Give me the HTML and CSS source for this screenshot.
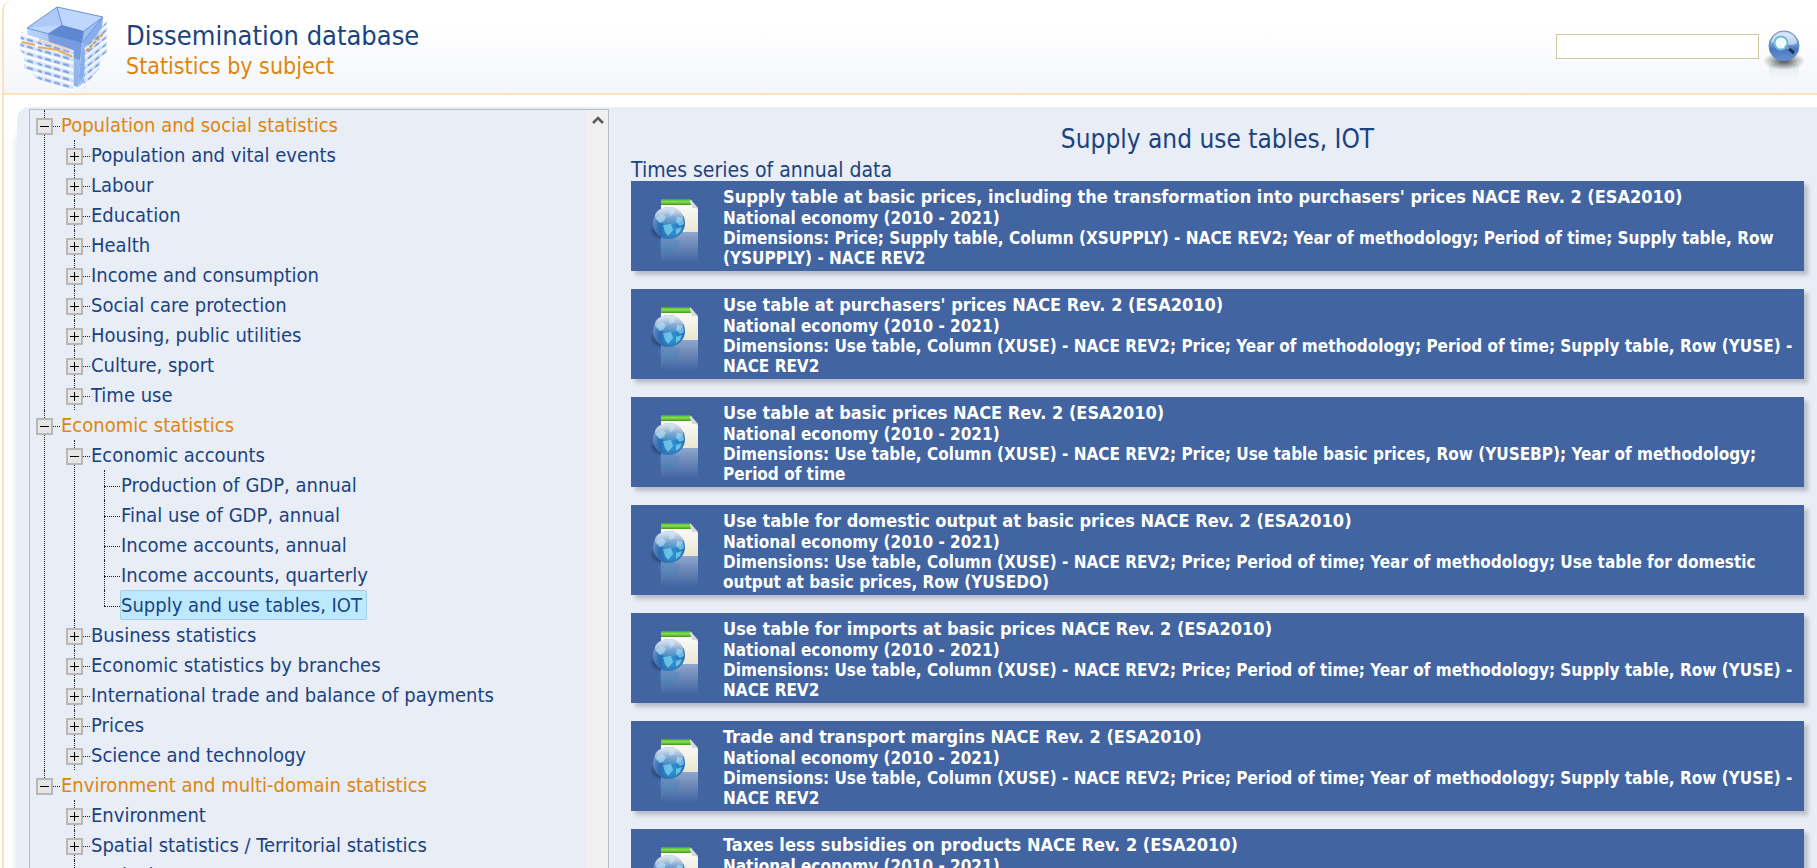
FILE: index.html
```html
<!DOCTYPE html>
<html lang="en">
<head>
<meta charset="utf-8">
<title>Dissemination database</title>
<link rel="stylesheet" href="styles.css">
</head>
<body>
<svg class="defs" width="0" height="0" aria-hidden="true">
  <defs>
    <linearGradient id="paper" x1="0" y1="0" x2="0" y2="1"><stop offset="0" stop-color="#fff"/><stop offset="1" stop-color="#e6e6d0"/></linearGradient>
    <linearGradient id="green" x1="0" y1="0" x2="0" y2="1"><stop offset="0" stop-color="#3fa51c"/><stop offset=".45" stop-color="#8be052"/><stop offset="1" stop-color="#3c9a1c"/></linearGradient>
    <radialGradient id="globe" cx=".6" cy=".7" r=".8"><stop offset="0" stop-color="#2f9ad6"/><stop offset=".5" stop-color="#2b6cb2"/><stop offset="1" stop-color="#93a9cc"/></radialGradient>
    <linearGradient id="gloss" x1="0" y1="0" x2="0" y2="1"><stop offset="0" stop-color="#e4ecf5" stop-opacity=".95"/><stop offset="1" stop-color="#dfe9f5" stop-opacity=".1"/></linearGradient>
    <linearGradient id="reflect" x1="0" y1="0" x2="0" y2="1"><stop offset="0" stop-color="#c4d2ea" stop-opacity=".6"/><stop offset="1" stop-color="#c4d2ea" stop-opacity="0"/></linearGradient>
    <radialGradient id="shade"><stop offset="0" stop-color="#0c1c3c" stop-opacity=".9"/><stop offset="1" stop-color="#0c1c3c" stop-opacity="0"/></radialGradient>
    <symbol id="dataset" viewBox="0 0 50 66">
      <path d="M12 2H42L49 11V34H12Z" fill="url(#paper)"/>
      <path d="M12 1H41L42 7H12Z" fill="url(#green)"/>
      <path d="M41 1L49 10H43Z" fill="#d5d9dc"/>
      <path d="M12 34H49V64H12Z" fill="url(#reflect)"/>
      <ellipse cx="14" cy="33" rx="14" ry="9" fill="url(#shade)"/>
      <circle cx="20" cy="25" r="16" fill="url(#globe)"/>
      <path d="M7 20L13 16L17 19L15 23L11 25ZM20 12L26 11L25 16L21 18ZM28 19L34 20L35 26L31 28L27 24ZM14 27L22 26L24 32L19 38L16 34ZM27 31L33 29L31 34L27 37Z" fill="#7fd3ee" opacity=".75"/>
      <ellipse cx="20" cy="18" rx="14" ry="9" fill="url(#gloss)"/>
      <path d="M9 43Q20 37 31 43Q31 54 20 57Q9 54 9 43Z" fill="#3f83bd" opacity=".35"/>
    </symbol>
  </defs>
</svg>
<div class="page">
  <header class="header">
    <svg class="logo" viewBox="0 0 97 93" aria-hidden="true">
      <defs>
        <linearGradient id="wall" x1="0" y1="0" x2="1" y2="1"><stop offset="0" stop-color="#b9d4fb"/><stop offset="1" stop-color="#8cb0ec"/></linearGradient>
        <pattern id="rows" width="9" height="7" patternUnits="userSpaceOnUse" patternTransform="skewY(16)"><rect width="9" height="7" fill="#dde9fc"/><path d="M1 2Q4 1 7 2" stroke="#6f97d8" stroke-width="2" fill="none"/><path d="M0 5H9" stroke="#fff" stroke-width="2"/></pattern>
        <pattern id="rows2" width="7" height="7" patternUnits="userSpaceOnUse" patternTransform="skewY(-38)"><rect width="7" height="7" fill="#d6e5fb"/><path d="M1 2H5" stroke="#7299d8" stroke-width="2"/><path d="M0 5H7" stroke="#fff" stroke-width="2"/></pattern>
      </defs>
      <path d="M10 28L40 7L86 17L65 43Z" fill="#c0d7fc"/>
      <path d="M10 28L45 25L40 7Z" fill="#adc9f8"/>
      <path d="M86 17L67 31L65 43Z" fill="#9dbdf4"/>
      <path d="M31 34L45 25L67 31L65 43Z" fill="#5f86d2"/>
      <path d="M10 28L65 43L61 87L15 74Z" fill="url(#wall)"/>
      <path d="M31 34L65 43L63 60L33 50Z" fill="#668cd6" opacity=".7"/>
      <path d="M65 43L86 17L82 69L61 87Z" fill="#89aeec"/>
      <path d="M65 43L74 64L61 87L82 69" fill="none" stroke="#bcd4fb"/>
      <path d="M4 32L20 38L56 50V92L20 80L16 74L7 70V54L3 50Z" fill="url(#rows)" opacity=".94"/>
      <path d="M5 42L18 45M21 47L40 50L56 57" fill="none" stroke="#e6ad6c" stroke-width="2"/>
      <path d="M22 40L52 50" stroke="#e3d3c6" stroke-width="3" stroke-dasharray="3 1"/>
      <path d="M20 37V80M56 50V92" stroke="#fff" fill="none"/>
      <path d="M68 47L78 38L90 20V55L84 60L82 68L67 89Z" fill="url(#rows2)" opacity=".9"/>
      <path d="M69 51L87 33" stroke="#d09a58" stroke-width="2" stroke-dasharray="4 1"/>
      <path d="M10 28L40 7L86 17L65 43ZM40 7L45 25M45 25L31 34M67 31L86 17" fill="none" stroke="#6c93dd"/>
    </svg>
    <div class="titles">
      <h1 class="title">Dissemination database</h1>
      <p class="subtitle">Statistics by subject</p>
    </div>
    <form class="search">
      <input class="search-box" type="text" aria-label="Search">
      <button class="search-button" type="button" aria-label="Search">
        <svg class="search-icon" viewBox="0 0 44 64" aria-hidden="true">
          <defs>
            <linearGradient id="ball" x1="0" y1="0" x2="0" y2="1"><stop offset="0" stop-color="#dbe6f5"/><stop offset=".45" stop-color="#6e98d4"/><stop offset=".6" stop-color="#4a78c0"/><stop offset="1" stop-color="#6692d6"/></linearGradient>
            <radialGradient id="drop"><stop offset="0" stop-color="#333" stop-opacity=".9"/><stop offset="1" stop-color="#555" stop-opacity="0"/></radialGradient>
            <linearGradient id="mirror" x1="0" y1="0" x2="0" y2="1"><stop offset="0" stop-color="#d9e5ed"/><stop offset="1" stop-color="#f4f7fa" stop-opacity="0"/></linearGradient>
          </defs>
          <path d="M6 41Q21 36 36 41Q36 54 32 62H10Q6 54 6 41Z" fill="url(#mirror)"/>
          <ellipse cx="21" cy="37" rx="21" ry="9" fill="url(#drop)"/>
          <circle cx="21" cy="22" r="15" fill="url(#ball)" stroke="#6585b8"/>
          <path d="M8 19Q10 9 21 9Q32 9 34 19Q28 23 21 19Q14 16 8 19Z" fill="#edf3fb" opacity=".6"/>
          <circle cx="18" cy="19" r="6.500" fill="#eefaff" stroke="#75b9d4" stroke-width="2"/>
          <path d="M22 22L26 25" stroke="#6fa6c4" stroke-width="2"/><path d="M26 25L31 29" stroke="#173548" stroke-width="3"/>
        </svg>
      </button>
    </form>
  </header>
  <main class="panel">
    <nav class="tree" aria-label="Subjects">
      <ul class="branch">
        <li class="node"><button class="toggle minus" aria-label="Collapse"></button><a class="label top" href="#">Population and social statistics</a>
          <ul class="branch">
            <li class="node"><button class="toggle plus" aria-label="Expand"></button><a class="label" href="#">Population and vital events</a></li>
            <li class="node"><button class="toggle plus" aria-label="Expand"></button><a class="label" href="#">Labour</a></li>
            <li class="node"><button class="toggle plus" aria-label="Expand"></button><a class="label" href="#">Education</a></li>
            <li class="node"><button class="toggle plus" aria-label="Expand"></button><a class="label" href="#">Health</a></li>
            <li class="node"><button class="toggle plus" aria-label="Expand"></button><a class="label" href="#">Income and consumption</a></li>
            <li class="node"><button class="toggle plus" aria-label="Expand"></button><a class="label" href="#">Social care protection</a></li>
            <li class="node"><button class="toggle plus" aria-label="Expand"></button><a class="label" href="#">Housing, public utilities</a></li>
            <li class="node"><button class="toggle plus" aria-label="Expand"></button><a class="label" href="#">Culture, sport</a></li>
            <li class="node"><button class="toggle plus" aria-label="Expand"></button><a class="label" href="#">Time use</a></li>
          </ul>
        </li>
        <li class="node"><button class="toggle minus" aria-label="Collapse"></button><a class="label top" href="#">Economic statistics</a>
          <ul class="branch">
            <li class="node"><button class="toggle minus" aria-label="Collapse"></button><a class="label" href="#">Economic accounts</a>
              <ul class="branch">
                <li class="node leaf"><a class="label" href="#">Production of GDP, annual</a></li>
                <li class="node leaf"><a class="label" href="#">Final use of GDP, annual</a></li>
                <li class="node leaf"><a class="label" href="#">Income accounts, annual</a></li>
                <li class="node leaf"><a class="label" href="#">Income accounts, quarterly</a></li>
                <li class="node leaf"><a class="label selected" href="#">Supply and use tables, IOT</a></li>
              </ul>
            </li>
            <li class="node"><button class="toggle plus" aria-label="Expand"></button><a class="label" href="#">Business statistics</a></li>
            <li class="node"><button class="toggle plus" aria-label="Expand"></button><a class="label" href="#">Economic statistics by branches</a></li>
            <li class="node"><button class="toggle plus" aria-label="Expand"></button><a class="label" href="#">International trade and balance of payments</a></li>
            <li class="node"><button class="toggle plus" aria-label="Expand"></button><a class="label" href="#">Prices</a></li>
            <li class="node"><button class="toggle plus" aria-label="Expand"></button><a class="label" href="#">Science and technology</a></li>
          </ul>
        </li>
        <li class="node"><button class="toggle minus" aria-label="Collapse"></button><a class="label top" href="#">Environment and multi-domain statistics</a>
          <ul class="branch">
            <li class="node"><button class="toggle plus" aria-label="Expand"></button><a class="label" href="#">Environment</a></li>
            <li class="node"><button class="toggle plus" aria-label="Expand"></button><a class="label" href="#">Spatial statistics / Territorial statistics</a></li>
            <li class="node"><button class="toggle plus" aria-label="Expand"></button><a class="label" href="#">Agriculture</a></li>
          </ul>
        </li>
      </ul>
      <div class="scrollbar" aria-hidden="true"><svg class="arrow" viewBox="0 0 12 8"><path d="M1 7L6 2L11 7" fill="none" stroke="#5a5a5a" stroke-width="2.500"/></svg></div>
    </nav>
    <section class="content">
      <h2 class="heading">Supply and use tables, IOT</h2>
      <h3 class="group">Times series of annual data</h3>
      <div class="cards">
        <a class="card" href="#"><svg class="card-icon" aria-hidden="true"><use href="#dataset"/></svg><span class="card-text"><span class="card-title">Supply table at basic prices, including the transformation into purchasers' prices NACE Rev. 2 (ESA2010)</span><span>National economy (2010 - 2021)</span><span>Dimensions: Price; Supply table, Column (XSUPPLY) - NACE REV2; Year of methodology; Period of time; Supply table, Row (YSUPPLY) - NACE REV2</span></span></a>
        <a class="card" href="#"><svg class="card-icon" aria-hidden="true"><use href="#dataset"/></svg><span class="card-text"><span class="card-title">Use table at purchasers' prices NACE Rev. 2 (ESA2010)</span><span>National economy (2010 - 2021)</span><span>Dimensions: Use table, Column (XUSE) - NACE REV2; Price; Year of methodology; Period of time; Supply table, Row (YUSE) - NACE REV2</span></span></a>
        <a class="card" href="#"><svg class="card-icon" aria-hidden="true"><use href="#dataset"/></svg><span class="card-text"><span class="card-title">Use table at basic prices NACE Rev. 2 (ESA2010)</span><span>National economy (2010 - 2021)</span><span>Dimensions: Use table, Column (XUSE) - NACE REV2; Price; Use table basic prices, Row (YUSEBP); Year of methodology; Period of time</span></span></a>
        <a class="card" href="#"><svg class="card-icon" aria-hidden="true"><use href="#dataset"/></svg><span class="card-text"><span class="card-title">Use table for domestic output at basic prices NACE Rev. 2 (ESA2010)</span><span>National economy (2010 - 2021)</span><span>Dimensions: Use table, Column (XUSE) - NACE REV2; Price; Period of time; Year of methodology; Use table for domestic output at basic prices, Row (YUSEDO)</span></span></a>
        <a class="card" href="#"><svg class="card-icon" aria-hidden="true"><use href="#dataset"/></svg><span class="card-text"><span class="card-title">Use table for imports at basic prices NACE Rev. 2 (ESA2010)</span><span>National economy (2010 - 2021)</span><span>Dimensions: Use table, Column (XUSE) - NACE REV2; Price; Period of time; Year of methodology; Supply table, Row (YUSE) - NACE REV2</span></span></a>
        <a class="card" href="#"><svg class="card-icon" aria-hidden="true"><use href="#dataset"/></svg><span class="card-text"><span class="card-title">Trade and transport margins NACE Rev. 2 (ESA2010)</span><span>National economy (2010 - 2021)</span><span>Dimensions: Use table, Column (XUSE) - NACE REV2; Price; Period of time; Year of methodology; Supply table, Row (YUSE) - NACE REV2</span></span></a>
        <a class="card" href="#"><svg class="card-icon" aria-hidden="true"><use href="#dataset"/></svg><span class="card-text"><span class="card-title">Taxes less subsidies on products NACE Rev. 2 (ESA2010)</span><span>National economy (2010 - 2021)</span><span>Dimensions: Use table, Column (XUSE) - NACE REV2; Price; Period of time; Year of methodology; Supply table, Row (YUSE) - NACE REV2</span></span></a>
      </div>
    </section>
  </main>
</div>
</body>
</html>
```
FILE: styles.css
```css
* { box-sizing: border-box; }
html { height: 100%; overflow: hidden; }
body {
  height: 100%;
  margin: 0;
  overflow: hidden;
  background: #fff;
  color: #1b4380;
  font-family: "DejaVu Sans Condensed", Tahoma, "Noto Sans", sans-serif;
  font-size: 20px;
}
a { color: inherit; text-decoration: none; }
button { margin: 0; padding: 0; border: 0; background: none; }
.defs { position: absolute; }
.page {
  display: flex;
  flex-direction: column;
  height: 100%;
  margin-left: 2px;
  border-left: 2px solid #fde0bc;
  border-top-left-radius: 10px;
}
.header {
  display: flex;
  flex: none;
  align-items: flex-start;
  border-bottom: 2px solid #fde0bc;
  background: linear-gradient(#fff 25%, #f4f6fb);
  border-top-left-radius: 10px;
}
.logo { width: 97px; height: 93px; margin-left: 13px; }
.titles { flex: 1; padding: 20px 0 0 12px; }
.title { margin: 0; font-size: 27px; line-height: 32px; font-weight: 400; }
.subtitle { margin: 0; font-size: 23px; line-height: 28px; color: #de860c; }
.search { display: flex; padding: 24px 10px 0 0; }
.search-box {
  width: 203px;
  height: 25px;
  margin-top: 10px;
  padding: 0 4px;
  border: 1px solid #cfc8a0;
  background: #fff;
  font: inherit;
  font-size: 16px;
}
.search-button { width: 44px; height: 64px; margin-left: 4px; }
.search-icon { display: block; width: 44px; height: 64px; }
.panel {
  display: flex;
  flex: 1;
  min-height: 0;
  margin: 12px 0 0 13px;
  padding-left: 12px;
  border-top-left-radius: 12px;
  background: #e8edf6;
  box-shadow: -2px 24px 8px -2px #d5dae3;
}
.tree {
  display: flex;
  flex: none;
  width: 580px;
  margin-top: 2px;
  border: 1px solid #b9bcc2;
  border-bottom: 0;
  overflow: hidden;
}
.branch { margin: 0; padding: 0; list-style: none; }
.tree > .branch { flex: 1; padding: 0 0 0 6px; }
.node { position: relative; padding-left: 25px; line-height: 30px; white-space: nowrap; }
.node::before {
  position: absolute;
  top: 0;
  bottom: 0;
  left: 8px;
  border-left: 1px dotted #222;
  content: "";
}
.tree > .branch > .node:last-child::before,
.leaf:last-child::before { height: 16px; }
.node::after {
  position: absolute;
  top: 16px;
  left: 8px;
  width: 16px;
  border-top: 1px dotted #222;
  content: "";
}
.node .branch { padding-left: 5px; }
.toggle {
  position: absolute;
  z-index: 1;
  top: 8px;
  left: 0;
  width: 17px;
  height: 17px;
  border: 2px solid #b8b8b8;
  background-color: #e6e6e6;
  background-image: linear-gradient(#000, #000);
  background-position: center;
  background-repeat: no-repeat;
  background-size: 9px 1px;
}
.plus {
  background-image: linear-gradient(#000, #000), linear-gradient(#000, #000);
  background-size: 9px 1px, 1px 9px;
}
.label { display: inline-block; height: 30px; line-height: 31px; vertical-align: top; }
.top { color: #de860c; }
.selected {
  margin-left: -1px;
  padding-right: 4px;
  border: 1px solid #a6cfe0;
  border-radius: 2px;
  background: #bde9ff;
  line-height: 29px;
}
.scrollbar { width: 21px; background: #f0f0f0; text-align: center; line-height: 0; }
.arrow { width: 12px; height: 8px; margin-top: 6px; }
.content { flex: 1; min-width: 0; padding: 12px 13px 0 22px; }
.heading { margin: 0; font-size: 26px; line-height: 40px; font-weight: 400; text-align: center; }
.group { margin: 0; font-size: 21px; line-height: 22px; font-weight: 400; }
.cards { display: flex; flex-direction: column; gap: 18px; }
.card {
  display: flex;
  padding: 5px 8px 3px 18px;
  background: #4265a1;
  box-shadow: 4px 4px 4px #b9bec8;
  color: #fff;
  font-size: 17px;
  line-height: 20px;
  font-weight: 700;
}
.card-icon { flex: none; width: 50px; height: 66px; margin-top: 12px; }
.card-text { flex: 1; padding-left: 24px; }
.card-text > span { display: block; }
.card-text > .card-title { font-size: 18px; line-height: 22px; }
```
